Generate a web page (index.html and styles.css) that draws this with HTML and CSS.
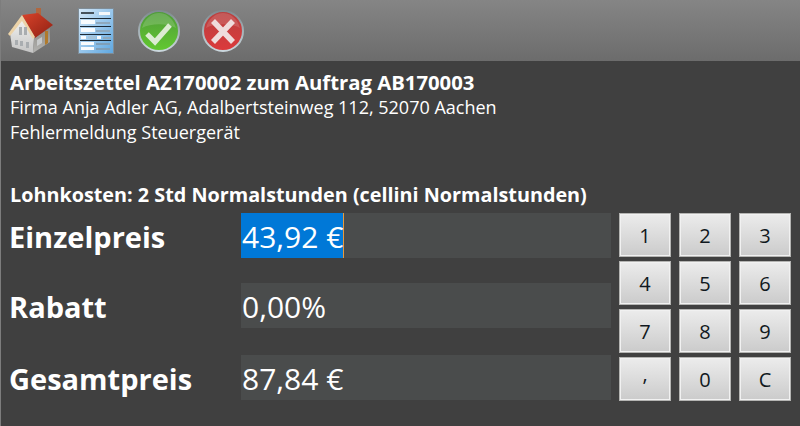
FILE: index.html
```html
<!DOCTYPE html>
<html lang="de">
<head>
    <meta charset="UTF-8">
    <meta name="viewport" content="width=device-width, initial-scale=1.0">
    <title>Arbeitszettel AZ170002</title>
    <link rel="stylesheet" href="styles.css">
</head>
<body>
    <div class="toolbar">
        <!-- house -->
        <svg class="tool tool-house" width="56" height="56" viewBox="0 0 56 56">
            <defs>
                <linearGradient id="wall" x1="0" y1="0" x2="0" y2="1">
                    <stop offset="0" stop-color="#f6f6f4"/>
                    <stop offset="1" stop-color="#c4c4c4"/>
                </linearGradient>
                <linearGradient id="side" x1="0" y1="0" x2="0" y2="1">
                    <stop offset="0" stop-color="#8d8a85"/>
                    <stop offset="1" stop-color="#b4b4b2"/>
                </linearGradient>
                <linearGradient id="roof" x1="0" y1="0" x2="1" y2="1">
                    <stop offset="0" stop-color="#d9432a"/>
                    <stop offset="1" stop-color="#8e2013"/>
                </linearGradient>
            </defs>
            <path d="M32 5h5v9l-5-1z" fill="#b0673f"/>
            <path d="M18 14 6 30 8 44 29 50 30 35z" fill="url(#wall)"/>
            <path d="M30 35 46 25 46 39 29 50z" fill="url(#side)"/>
            <path d="M41 28h3v12l-3 2z" fill="#b07a2c"/>
            <path d="M18 12 34 10 49 22 31 35z" fill="url(#roof)"/>
            <path d="M4 31 18 12 31 34 29 36 18 18 6 33z" fill="#ecd3a8"/>
            <path d="M15 24h3v8h-3zM20 24h3v8h-3zM11 37h3v5h-3zM16 38h3v5h-3zM22 39h3v6h-3z" fill="#a9adb0"/>
            <path d="M33 37l5-3v6l-5 3z" fill="#c8cacb"/>
        </svg>
        <!-- form -->
        <svg class="tool tool-form" width="36" height="46" viewBox="0 0 36 46">
            <defs>
                <linearGradient id="sheet" x1="0" y1="0" x2="1" y2="1">
                    <stop offset="0" stop-color="#d5e8f8"/>
                    <stop offset="1" stop-color="#5ea7e0"/>
                </linearGradient>
            </defs>
            <rect x="0.5" y="0.5" width="35" height="45" fill="url(#sheet)" stroke="#7f8c96"/>
            <rect x="3" y="4" width="13" height="2" fill="#46525c"/>
            <rect x="21" y="4" width="11" height="3" fill="#f4f8fb"/>
            <rect x="2" y="10" width="31" height="1" fill="#1d2a35"/>
            <rect x="3" y="12" width="14" height="4" fill="#f8fbfd"/>
            <rect x="18" y="14" width="14" height="2" fill="#8fa9bd"/>
            <rect x="2" y="18" width="31" height="1" fill="#1d2a35"/>
            <rect x="3" y="20" width="14" height="4" fill="#f8fbfd"/>
            <rect x="18" y="22" width="14" height="2" fill="#8fa9bd"/>
            <rect x="2" y="26" width="31" height="1" fill="#1d2a35"/>
            <rect x="3" y="28" width="5" height="3" fill="#f8fbfd"/>
            <rect x="10" y="28" width="8" height="3" fill="#a6c4da"/>
            <rect x="19" y="28" width="4" height="3" fill="#f8fbfd"/>
            <rect x="25" y="29" width="8" height="2" fill="#8fa9bd"/>
            <rect x="2" y="32" width="31" height="1" fill="#1d2a35"/>
            <rect x="3" y="34" width="13" height="3" fill="#f8fbfd"/>
            <rect x="18" y="35" width="14" height="2" fill="#7f9fb8"/>
            <rect x="3" y="39" width="13" height="3" fill="#f8fbfd"/>
            <rect x="18" y="40" width="14" height="2" fill="#7f9fb8"/>
        </svg>
        <!-- ok -->
        <svg class="tool tool-ok" width="44" height="44" viewBox="0 0 44 44">
            <defs>
                <linearGradient id="green" x1="0" y1="0" x2="0" y2="1">
                    <stop offset="0" stop-color="#4f9a3a"/>
                    <stop offset="1" stop-color="#62c92f"/>
                </linearGradient>
                <linearGradient id="rim" x1="0" y1="0" x2="0" y2="1">
                    <stop offset="0" stop-color="#7f8b90"/>
                    <stop offset="1" stop-color="#cbd8de"/>
                </linearGradient>
            </defs>
            <circle cx="22" cy="22" r="20" fill="url(#green)" stroke="url(#rim)" stroke-width="2"/>
            <path d="M5 19C8 8 16 4 22 4s14 4 17 15C30 14 14 14 5 19z" fill="#fff" opacity="0.16"/>
            <path d="M10 25 18 33 33 16" fill="none" stroke="#dcecd2" stroke-width="5"/>
        </svg>
        <!-- cancel -->
        <svg class="tool tool-cancel" width="44" height="44" viewBox="0 0 44 44">
            <defs>
                <linearGradient id="red" x1="0" y1="0" x2="0" y2="1">
                    <stop offset="0" stop-color="#b8403f"/>
                    <stop offset="1" stop-color="#dc3a3c"/>
                </linearGradient>
            </defs>
            <circle cx="22" cy="22" r="20" fill="url(#red)" stroke="url(#rim)" stroke-width="2"/>
            <path d="M5 19C8 8 16 4 22 4s14 4 17 15C30 14 14 14 5 19z" fill="#fff" opacity="0.14"/>
            <path d="M12 12 32 33M32 12 12 33" fill="none" stroke="#efdcdc" stroke-width="5.5"/>
        </svg>
    </div>

    <div class="content">
        <div class="info">
            <div class="info-title">Arbeitszettel AZ170002 zum Auftrag AB170003</div>
            <div>Firma Anja Adler AG, Adalbertsteinweg 112, 52070 Aachen</div>
            <div>Fehlermeldung Steuergerät</div>
            <div class="info-costs">Lohnkosten: 2 Std Normalstunden (cellini Normalstunden)</div>
        </div>

        <div class="entry">
            <div class="fields">
                <div class="field">
                    <div class="field-label">Einzelpreis</div>
                    <div class="field-value"><span class="selected">43,92 €</span></div>
                </div>
                <div class="field">
                    <div class="field-label">Rabatt</div>
                    <div class="field-value">0,00%</div>
                </div>
                <div class="field field-total">
                    <div class="field-label">Gesamtpreis</div>
                    <div class="field-value">87,84 €</div>
                </div>
            </div>
            <div class="keypad">
                <button class="key">1</button>
                <button class="key">2</button>
                <button class="key">3</button>
                <button class="key">4</button>
                <button class="key">5</button>
                <button class="key">6</button>
                <button class="key">7</button>
                <button class="key">8</button>
                <button class="key">9</button>
                <button class="key key-comma">,</button>
                <button class="key">0</button>
                <button class="key">C</button>
            </div>
        </div>
    </div>
</body>
</html>
```

FILE: styles.css
```css
html, body {
    height: 100%;
}
body {
    margin: 0;
    background: #404040;
    color: white;
    font-family: 'Open Sans', 'Noto Sans', sans-serif;
    overflow: hidden;
    border-left: 1px solid #7d7d7d;
    box-sizing: border-box;
}
.toolbar {
    display: flex;
    align-items: center;
    height: 61px;
    margin-left: -1px;
    background: linear-gradient(#858585, #6c6c6c);
}
.tool {
    flex: none;
}
.tool-house {
    margin-left: 4px;
}
.tool-form {
    margin-left: 18px;
}
.tool-ok {
    margin-left: 23px;
}
.tool-cancel {
    margin-left: 20px;
}
.content {
    padding: 9px 9px 0 9px;
}
.info {
    font-size: 18px;
    line-height: 25px;
}
.info-title {
    font-weight: 700;
    font-size: 20.3px;
}
.info-costs {
    margin-top: 37px;
    font-weight: 700;
    font-size: 19.8px;
}
.entry {
    display: flex;
    margin-top: 6px;
}
.fields {
    width: 601px;
    display: flex;
    flex-direction: column;
    gap: 25px;
}
.field {
    display: flex;
    height: 45px;
}
.field-total {
    margin-top: 2px;
}
.field-label {
    width: 232px;
    margin-left: -1px;
    font-size: 29px;
    font-weight: 700;
    line-height: 48px;
}
.field-value {
    flex: 1;
    background: #4a4c4c;
    font-size: 30px;
    line-height: 47px;
    padding-left: 1px;
}
.selected {
    display: inline-block;
    height: 45px;
    margin-left: -1px;
    padding-left: 1px;
    background: #0078d7;
    border-right: 1px solid #e89a3c;
}
.keypad {
    display: grid;
    grid-template-columns: repeat(3, 52px);
    grid-auto-rows: 44px;
    column-gap: 8px;
    row-gap: 4px;
    margin-left: 8px;
}
.key {
    padding: 0;
    border: 1px solid #b4b4b2;
    border-radius: 0;
    box-shadow: inset 0 0 0 1px #f1f1f1;
    background: linear-gradient(#ececec, #cbcbcb);
    color: #101820;
    font-family: 'Open Sans', 'Noto Sans', sans-serif;
    font-size: 20px;
}
.key-comma {
    padding-bottom: 12px;
}
```
